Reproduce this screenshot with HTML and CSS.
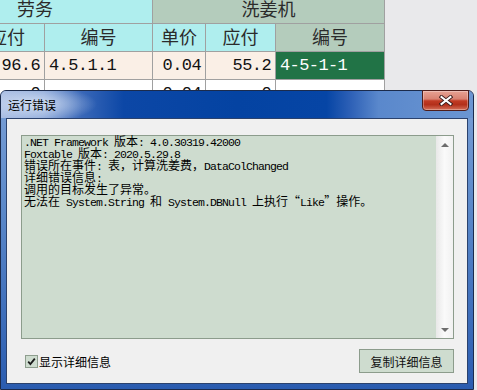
FILE: index.html
```html
<!DOCTYPE html>
<html lang="zh-CN">
<head>
    <meta charset="UTF-8">
    <title>运行错误</title>
    <link rel="stylesheet" href="styles.css">
</head>
<body>
    <!-- 表格（已滚动） -->
    <div class="sheet">
        <div class="grid">
            <div class="c hd span3">劳务</div>
            <div class="c hd alt span3">洗姜机</div>

            <div class="c hd"></div>
            <div class="c hd">应付</div>
            <div class="c hd">编号</div>
            <div class="c hd">单价</div>
            <div class="c hd">应付</div>
            <div class="c hd alt">编号</div>

            <div class="c odd"></div>
            <div class="c odd num r">96.6</div>
            <div class="c odd num">4.5.1.1</div>
            <div class="c odd num r">0.04</div>
            <div class="c odd num r">55.2</div>
            <div class="c cur num">4-5-1-1</div>

            <div class="c blank"></div>
            <div class="c blank num r">0</div>
            <div class="c blank num"></div>
            <div class="c blank num r">0.04</div>
            <div class="c blank num r">0</div>
            <div class="c blank num"></div>
        </div>
    </div>

    <!-- 运行错误 对话框 -->
    <div class="dialog">
        <div class="titlebar">
            <span class="title">运行错误</span>
            <button class="close">
                <svg width="14" height="11" viewBox="0 0 14 11">
                    <path d="M2.5 2 L11.5 9 M11.5 2 L2.5 9" stroke="#3a1c1c" stroke-width="3.8" stroke-linecap="square"/>
                    <path d="M2.5 2 L11.5 9 M11.5 2 L2.5 9" stroke="#ffffff" stroke-width="2" stroke-linecap="square"/>
                </svg>
            </button>
        </div>
        <div class="client">
            <div class="detail">
                <div class="msg">
                    <div>.NET Framework <span class="cj">版本</span>: 4.0.30319.42000</div>
                    <div>Foxtable <span class="cj">版本</span>: 2020.5.29.8</div>
                    <div><span class="cj">错误所在事件</span>: <span class="cj">表，计算洗姜费，</span>DataColChanged</div>
                    <div><span class="cj">详细错误信息</span>:</div>
                    <div><span class="cj">调用的目标发生了异常。</span></div>
                    <div><span class="cj">无法在</span> System.String <span class="cj">和</span> System.DBNull <span class="cj">上执行“</span>Like<span class="cj">”操作。</span></div>
                </div>
                <div class="vscroll">
                    <span class="arrow up"></span>
                    <span class="arrow down"></span>
                </div>
            </div>
            <div class="footer">
                <label class="check">
                    <span class="box">
                        <svg width="9" height="9" viewBox="0 0 9 9">
                            <path d="M1.2 4.6 L3.4 7 L7.8 1.6" fill="none" stroke="#1a1a1a" stroke-width="1.8"/>
                        </svg>
                    </span>
                    显示详细信息
                </label>
                <button class="btn">复制详细信息</button>
            </div>
        </div>
    </div>
</body>
</html>
```

FILE: styles.css
```css
* {
    margin: 0;
    padding: 0;
    box-sizing: border-box;
}

body {
    background: #e9e9eb;
    font-family: "Noto Sans CJK SC", sans-serif;
    overflow: hidden;
}

/* 表格 */
.sheet {
    height: 390px;
    overflow: hidden;
}

.grid {
    display: grid;
    grid-template-columns: 52px 75px 108px 53px 70px 109px;
    grid-auto-rows: 28px;
    width: 467px;
    margin: -4px 0 0 -82px;
}

.c {
    display: flex;
    align-items: center;
    padding: 0 4px;
    border-right: 1px solid #a0a0a0;
    border-bottom: 1px solid #a0a0a0;
    font-size: 18px;
    color: #2b2b2b;
    white-space: nowrap;
    overflow: hidden;
}

.hd {
    background: #afeeee;
    justify-content: center;
    padding-bottom: 3px;
}

.hd.alt {
    background: #b4ccbc;
}

.span3 {
    grid-column: span 3;
}

.num {
    font-family: "Liberation Mono", monospace;
    font-size: 17px;
    letter-spacing: -0.6px;
    color: #111;
}

.r {
    justify-content: flex-end;
}

.odd {
    background: #faefe6;
}

.cur {
    background: #217346;
    color: #fff;
}

.blank {
    background: #fff;
}

/* 对话框 */
.dialog {
    position: absolute;
    left: 0;
    top: 90px;
    width: 474px;
    height: 300px;
    display: flex;
    flex-direction: column;
    padding: 0 5px 5px;
    border: 1px solid #1b2b4c;
    border-radius: 6px 6px 0 0;
    background: linear-gradient(180deg, #7ba0d6 0%, #5a88c9 40%, #2a5cb0 100%);
}

.titlebar {
    height: 27px;
    margin: 0 -5px;
    padding-left: 7px;
    display: flex;
    align-items: flex-start;
    border-radius: 5px 5px 0 0;
    background:
        radial-gradient(ellipse 62px 18px at 34px 13px, rgba(214, 226, 244, 0.9), rgba(214, 226, 244, 0)),
        linear-gradient(90deg, #a6bbe2 0%, #8aa6d8 9%, #3a68b8 17%, #0c47a6 26%, #0443a2 50%, #0645a5 69%, #2d60b6 74%, #5a88cc 80%, #6b96d2 100%);
}

.title {
    font-size: 12px;
    line-height: 27px;
    color: #000;
}

.close {
    margin: -1px 4px 0 auto;
    width: 47px;
    height: 21px;
    display: flex;
    align-items: center;
    justify-content: center;
    border: 1px solid #4e1d1a;
    border-radius: 0 0 4px 4px;
    background: linear-gradient(180deg, #e7a294 0%, #d98272 42%, #c13a24 52%, #b32f1a 72%, #d5705a 100%);
    box-shadow: inset 0 0 0 1px rgba(255, 255, 255, 0.3);
}

.client {
    flex: 1;
    display: flex;
    flex-direction: column;
    padding: 16px 13px 0 14px;
    border: 1px solid #2b426d;
    background: #f0f0f0;
}

.detail {
    height: 204px;
    display: flex;
    border: 1px solid #8c9c8c;
    background: #cedccf;
}

.msg {
    flex: 1;
    padding: 1px 2px;
    font-family: "Liberation Mono", monospace;
    font-size: 11.5px;
    letter-spacing: -0.9px;
    line-height: 12px;
    color: #000;
    white-space: nowrap;
}

.cj {
    font-family: "Noto Sans CJK SC", sans-serif;
    font-size: 12px;
    letter-spacing: 0;
    line-height: 0;
}

.vscroll {
    width: 17px;
    display: flex;
    flex-direction: column;
    justify-content: space-between;
    background: linear-gradient(90deg, #e8e8e8, #fafafa 50%, #f1f1f1);
}

.arrow {
    height: 17px;
    display: flex;
    align-items: center;
    justify-content: center;
}

.arrow::after {
    content: "";
    border-left: 4px solid transparent;
    border-right: 4px solid transparent;
    border-bottom: 4px solid #6d6d6d;
}

.arrow.down::after {
    border-bottom: 0;
    border-top: 4px solid #6d6d6d;
}

.footer {
    margin-top: 10px;
    height: 24px;
    display: flex;
    align-items: center;
    justify-content: space-between;
    padding-left: 4px;
}

.check {
    display: flex;
    align-items: center;
    gap: 1px;
    font-size: 12px;
    color: #000;
}

.box {
    width: 13px;
    height: 13px;
    display: flex;
    align-items: center;
    justify-content: center;
    border: 1px solid #8e9e8e;
    background: #cedccf;
}

.btn {
    width: 95px;
    height: 24px;
    border: 1px solid #8c9c8c;
    background: #cedccf;
    font-family: "Noto Sans CJK SC", sans-serif;
    font-size: 12px;
    color: #111;
}
```
